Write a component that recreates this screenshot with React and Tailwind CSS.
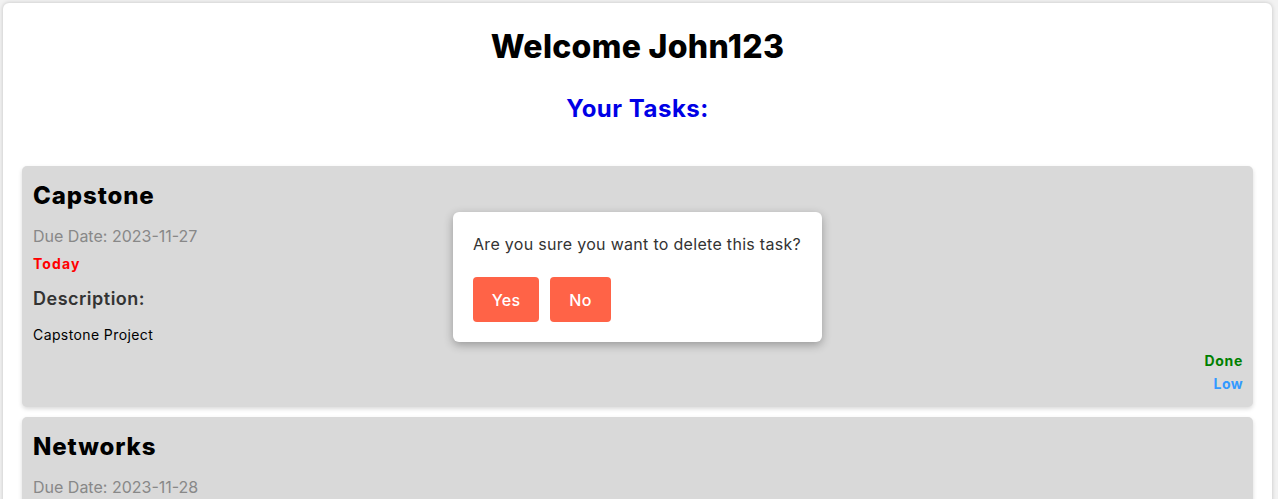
const tasks = [
  {
    title: 'Capstone',
    due: '2023-11-27',
    flag: 'Today',
    description: 'Capstone Project',
    status: 'Done',
    priority: 'Low',
  },
  {
    title: 'Networks',
    due: '2023-11-28',
    flag: null,
    description: 'Networks Assignment',
    status: 'Pending',
    priority: 'High',
  },
];

const TaskCard = ({ task }) => (
  <div className="rounded-[5px] bg-[#d9d9d9] pl-[11px] pr-[10px] pt-[12px] pb-[13px] shadow-[0_2px_4px_rgba(0,0,0,0.15)]">
    <h2 className="text-[24px] font-extrabold leading-[36px] tracking-[0.9px] text-black">{task.title}</h2>
    <p className="mt-[10px] text-[16px] leading-[24px] text-[#888888]">Due Date: {task.due}</p>
    {task.flag && (
      <p className="mt-[6px] text-[14px] font-bold leading-[20px] tracking-[1.1px] text-[#ff0000]">{task.flag}</p>
    )}
    <h3 className="mt-[11px] text-[18px] font-semibold leading-[28px] tracking-[0.5px] text-[#333333]">Description:</h3>
    <p className="mt-[12px] text-[14px] leading-[20px] tracking-[0.4px] text-black">{task.description}</p>
    <div className="mt-[6px] flex flex-col items-end">
      <span className="text-[14px] font-bold leading-[20px] tracking-[0.7px] text-[#008000]">{task.status}</span>
      <span className="mt-[3px] text-[14px] font-bold leading-[20px] tracking-[0.4px] text-[#3399ff]">{task.priority}</span>
    </div>
  </div>
);

const ConfirmDialog = () => (
  <div className="absolute left-[453px] top-[212px] w-[369px] rounded-[6px] bg-white p-[20px] shadow-[0_3px_10px_rgba(0,0,0,0.3)]">
    <p className="text-[16px] leading-[24px] tracking-[0.3px] text-[#333333]">Are you sure you want to delete this task?</p>
    <div className="mt-[21px] flex gap-[11px]">
      <button className="h-[45px] w-[66px] rounded-[4px] bg-[#ff6347] text-[16px] font-medium tracking-[0.3px] text-white">Yes</button>
      <button className="h-[45px] w-[61px] rounded-[4px] bg-[#ff6347] text-[16px] font-medium tracking-[0.3px] text-white">No</button>
    </div>
  </div>
);

export default function App() {
  return (
    <div className="relative h-[499px] overflow-hidden bg-[#f2f2f2] pt-[3px] pl-[3px] pr-[6px] font-['Inter','Noto_Sans',sans-serif]">
      <div className="min-h-[600px] rounded-[6px] bg-white px-[19px] shadow-[0_0_4px_rgba(0,0,0,0.2)]">
        <h1 className="pt-[24px] text-center text-[32px] font-extrabold leading-[40px] tracking-[0.3px] text-black">Welcome John123</h1>
        <h2 className="mt-[24px] text-center text-[24px] font-bold leading-[36px] tracking-[0.5px] text-[#0000e6]">Your Tasks:</h2>
        <div className="mt-[39px] flex flex-col gap-[10px]">
          {tasks.map((task) => (
            <TaskCard key={task.title} task={task} />
          ))}
        </div>
      </div>
      <ConfirmDialog />
    </div>
  );
}
